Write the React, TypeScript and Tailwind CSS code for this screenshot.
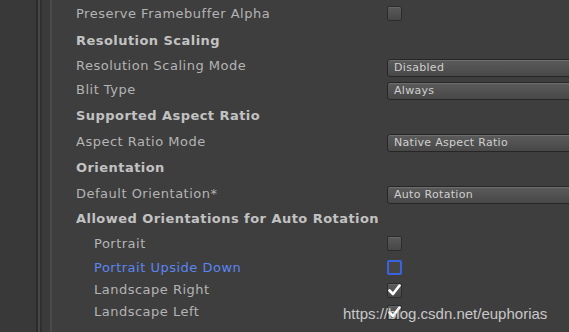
import React from "react";

type Row =
  | { kind: "head"; label: string; h: string }
  | { kind: "drop"; label: string; value: string; h: string }
  | { kind: "check"; label: string; h: string; checked?: boolean; focus?: boolean; sub?: boolean };

const rows: Row[] = [
  { kind: "check", label: "Preserve Framebuffer Alpha", h: "h-[27px]" },
  { kind: "head", label: "Resolution Scaling", h: "h-[28px]" },
  { kind: "drop", label: "Resolution Scaling Mode", value: "Disabled", h: "h-[22px]" },
  { kind: "drop", label: "Blit Type", value: "Always", h: "h-[25px]" },
  { kind: "head", label: "Supported Aspect Ratio", h: "h-[27px]" },
  { kind: "drop", label: "Aspect Ratio Mode", value: "Native Aspect Ratio", h: "h-[25px]" },
  { kind: "head", label: "Orientation", h: "h-[27px]" },
  { kind: "drop", label: "Default Orientation*", value: "Auto Rotation", h: "h-[25px]" },
  { kind: "head", label: "Allowed Orientations for Auto Rotation", h: "h-[25px]" },
  { kind: "check", label: "Portrait", h: "h-[25px]", sub: true },
  { kind: "check", label: "Portrait Upside Down", h: "h-[23px]", sub: true, focus: true },
  { kind: "check", label: "Landscape Right", h: "h-[22px]", sub: true, checked: true },
  { kind: "check", label: "Landscape Left", h: "h-[22px]", sub: true, checked: true },
];

function Checkbox({ checked, focus }: { checked?: boolean; focus?: boolean }) {
  return (
    <div
      className={
        focus
          ? "shrink-0 w-[15px] h-[15px] rounded-[2px] border-2 border-[#3b62e0] bg-[#454545]"
          : "shrink-0 w-[15px] h-[15px] rounded-[2px] border border-[#2c2c2c] bg-gradient-to-b from-[#5a5a5a] to-[#474747] shadow-[inset_0_1px_0_#666] flex items-center justify-center"
      }
    >
      {checked && (
        <svg width="13" height="12" viewBox="0 0 13 12">
          <path d="M1.5 6.5 L5 10 L11.5 1.5" fill="none" stroke="#fff" strokeWidth="2.6" strokeLinecap="round" strokeLinejoin="round" />
        </svg>
      )}
    </div>
  );
}

function Dropdown({ value }: { value: string }) {
  return (
    <div className="shrink-0 mt-[3px] w-[220px] h-[18px] rounded-[3px] border border-[#262626] bg-gradient-to-b from-[#5b5b5b] to-[#484848] shadow-[inset_0_1px_0_#6e6e6e] flex items-center pl-[6px] pt-[1px] text-[11px] tracking-[0.3px] text-[#cfcfcf]">
      {value}
    </div>
  );
}

export default function App() {
  return (
    <div className="relative w-[569px] h-[332px] overflow-hidden flex bg-[#3e3e3e]" style={{ fontFamily: '"DejaVu Sans", "Liberation Sans", sans-serif' }}>
      <div className="shrink-0 w-[36px] bg-[#393939]" />
      <div className="shrink-0 w-[2px] bg-[#2b2b2b]" />
      <div className="shrink-0 w-[2px] bg-[#474747]" />
      <div className="shrink-0 w-[2px] bg-[#2f2f2f]" />
      <div className="shrink-0 w-[8px] bg-[#3b3b3b]" />
      <div className="shrink-0 w-[2px] bg-[#4a4a4a]" />
      <div className="flex-1 min-w-0 flex flex-col pl-[24px]">
        {rows.map((r) => (
          <div key={r.label} className={`${r.h} flex items-center shrink-0`}>
            {r.kind === "head" ? (
              <span className="text-[13px] font-bold text-[#c2c2c2] tracking-[0.45px] whitespace-nowrap">{r.label}</span>
            ) : (
              <>
                <span
                  className={
                    r.kind === "check" && r.focus
                      ? "w-[311px] shrink-0 pl-[18px] text-[13px] tracking-[0.5px] text-[#5a86f2]"
                      : r.kind === "check" && r.sub
                      ? "w-[311px] shrink-0 pl-[18px] text-[13px] tracking-[0.5px] text-[#b4b4b4]"
                      : "w-[311px] shrink-0 text-[13px] tracking-[0.5px] text-[#b4b4b4]"
                  }
                >
                  {r.label}
                </span>
                {r.kind === "drop" ? (
                  <Dropdown value={r.value} />
                ) : (
                  <Checkbox checked={r.checked} focus={r.focus} />
                )}
              </>
            )}
          </div>
        ))}
      </div>
      <div className="absolute left-[343px] top-[303px] text-[15px] text-[#e2e2e2]/85 whitespace-nowrap" style={{ fontFamily: '"Liberation Sans", Arial, sans-serif' }}>
        https://blog.csdn.net/euphorias
      </div>
    </div>
  );
}
